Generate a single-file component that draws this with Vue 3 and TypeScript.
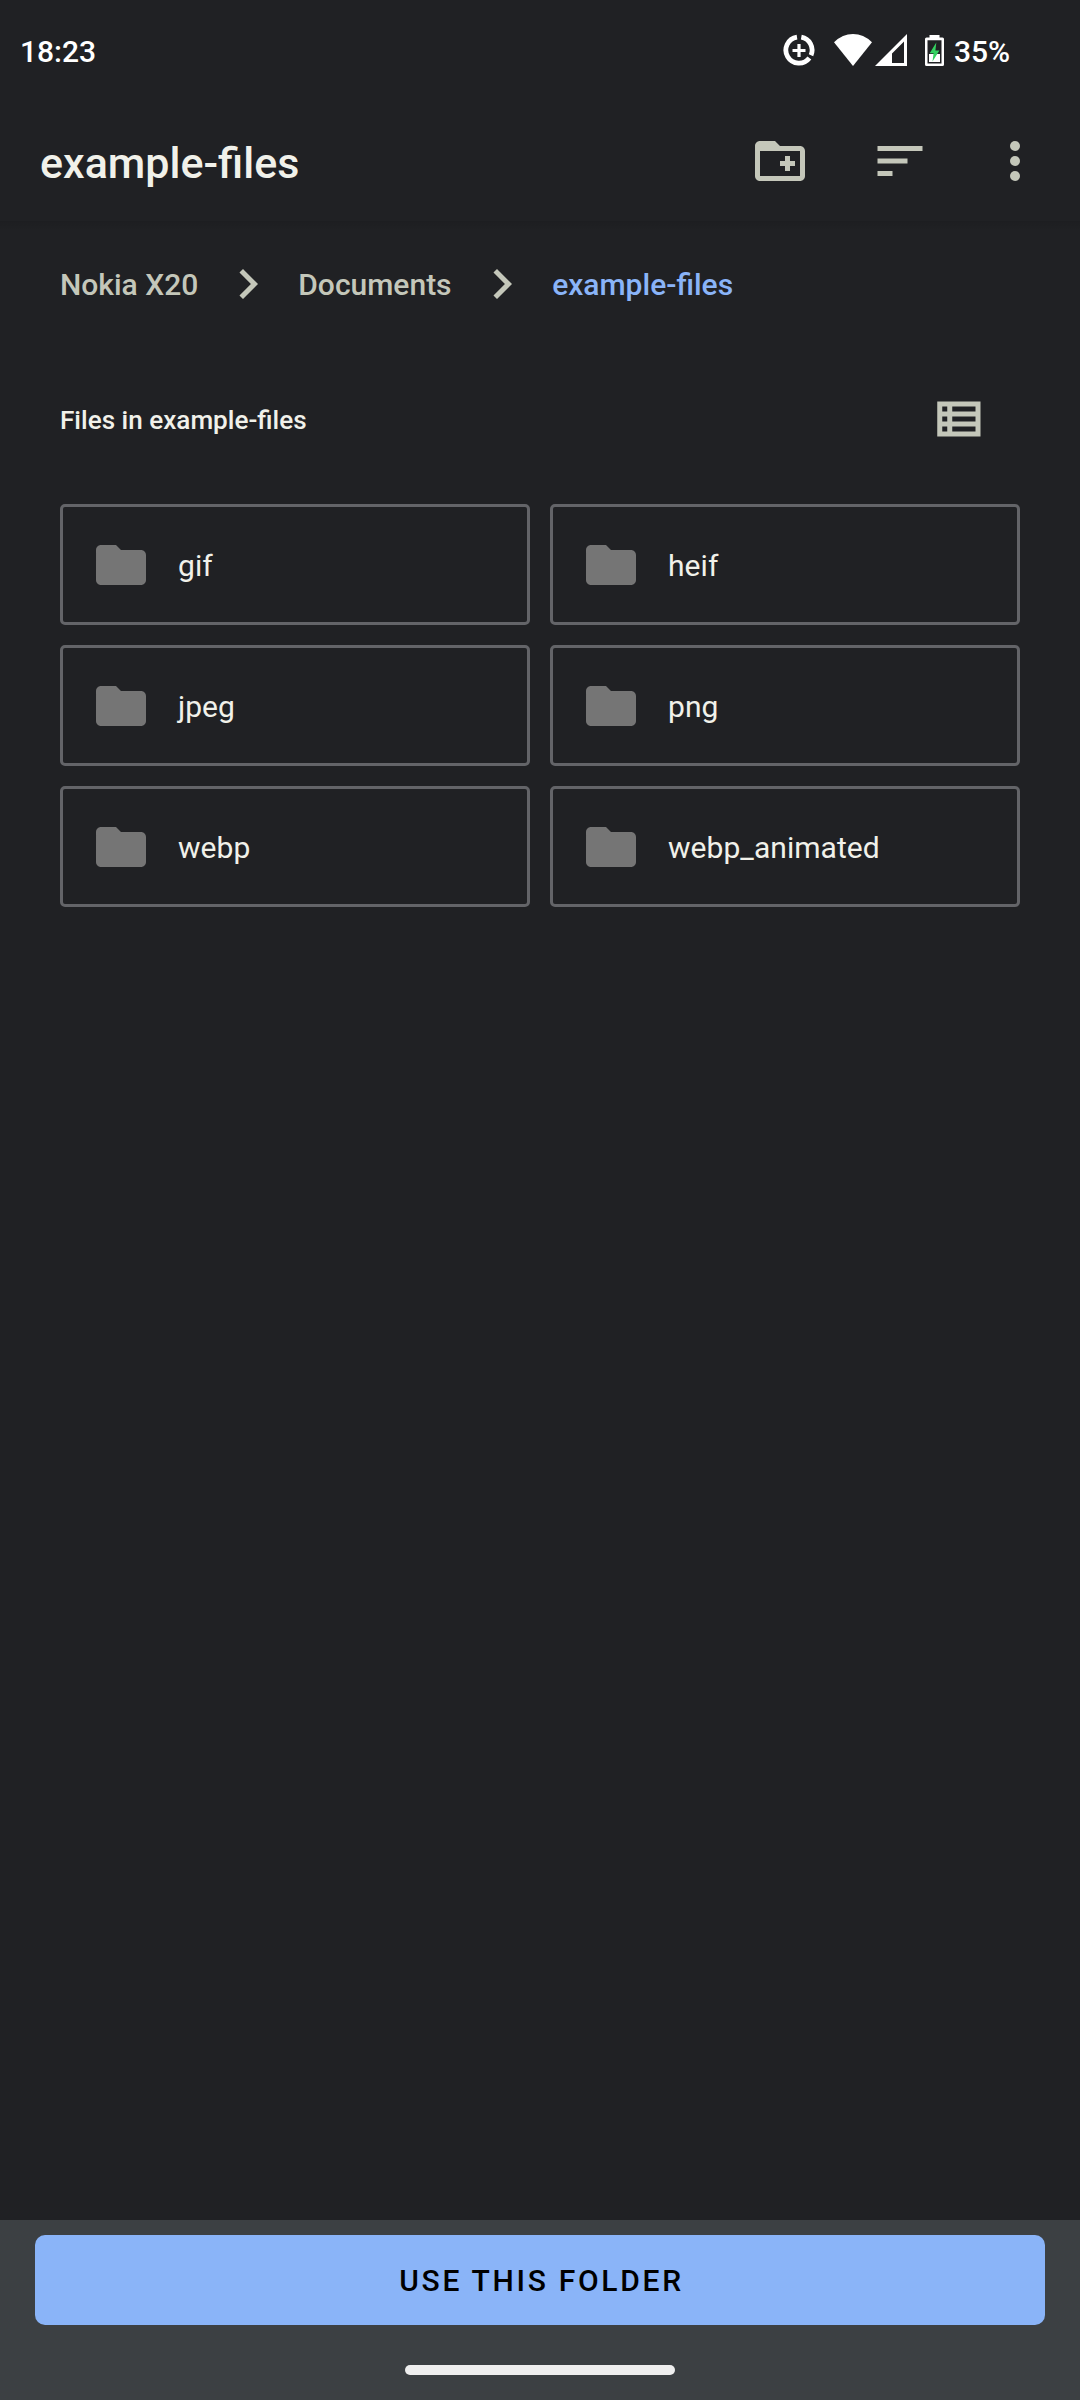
<script setup lang="ts">
interface Crumb {
  label: string
  current?: boolean
}

const crumbs: Crumb[] = [
  { label: 'Nokia X20' },
  { label: 'Documents' },
  { label: 'example-files', current: true },
]

const folders: string[] = ['gif', 'heif', 'jpeg', 'png', 'webp', 'webp_animated']
</script>

<template>
  <div class="screen">
    <div class="status-bar">
      <span class="clock">18:23</span>
      <div class="indicators">
        <svg class="saver" viewBox="0 0 32 32">
          <path d="M18.3 3.1A13.1 13.1 0 0 1 28 21.2M26.4 24A13.1 13.1 0 1 1 14 3.1" fill="none" stroke="#fff" stroke-width="4.8" />
          <path d="M16 10v13M9.500 16.500h13" stroke="#fff" stroke-width="3.200" />
        </svg>
        <svg class="wifi" viewBox="0 0 38 32">
          <path d="M0 8.200Q8.500 0 19 0T38 8.200L19 32Z" fill="#fff" />
        </svg>
        <svg class="signal" viewBox="0 0 32 32">
          <path d="M32 0V32H0ZM29 7.500L17 19.500V29H29Z" fill="#fff" fill-rule="evenodd" />
        </svg>
        <svg class="battery" viewBox="0 0 19 31">
          <path d="M4.500 0H14.500V2.500H17.500Q19 2.500 19 4V29.500Q19 31 17.500 31H1.500Q0 31 0 29.500V4Q0 2.500 1.500 2.500H4.500ZM2.500 5.300V28.500H16.500V5.300Z" fill="#fff" fill-rule="evenodd" />
          <path d="M4 19H15V27H4Z" fill="#fff" />
          <path d="M11.300 7.500L4.700 18.200H8.600L7.500 26.500L14.400 15.500H10.400Z" fill="#34d160" />
        </svg>
        <span class="percent">35%</span>
      </div>
    </div>

    <header class="toolbar">
      <h1 class="title">example-files</h1>
      <div class="actions">
        <svg class="icon" viewBox="0 0 24 24">
          <path d="M20 6h-8l-2-2H4c-1.110 0-1.990.89-1.990 2L2 18c0 1.110.89 2 2 2h16c1.110 0 2-.89 2-2V8c0-1.110-.89-2-2-2zm0 12H4V8h16v10zM14 14h-2v-2h2v-2h2v2h2v2h-2v2h-2z" />
        </svg>
        <svg class="icon" viewBox="0 0 24 24">
          <path d="M3 18h6v-2H3v2zM3 6v2h18V6H3zm0 7h12v-2H3v2z" />
        </svg>
        <svg class="icon" viewBox="0 0 24 24">
          <circle cx="12" cy="6" r="2" />
          <circle cx="12" cy="12" r="2" />
          <circle cx="12" cy="18" r="2" />
        </svg>
      </div>
    </header>

    <main class="content">
      <nav class="crumbs">
        <template v-for="(crumb, index) in crumbs" :key="crumb.label">
          <svg v-if="index > 0" class="icon chevron" viewBox="0 0 24 24">
            <path d="M10 6L8.590 7.410 13.170 12l-4.580 4.590L10 18l6-6z" />
          </svg>
          <span class="crumb" :class="{ current: crumb.current }">{{ crumb.label }}</span>
        </template>
      </nav>

      <div class="section-head">
        <h2 class="section-title">Files in example-files</h2>
        <svg class="icon" viewBox="0 0 24 24">
          <path fill-rule="evenodd" d="M2.900 5H20.200V19H2.900ZM4.900 7V9H6.900V7ZM8.900 7V9H18.200V7ZM4.900 11V13H6.900V11ZM8.900 11V13H18.200V11ZM4.900 15V17H6.900V15ZM8.900 15V17H18.200V15Z" />
        </svg>
      </div>

      <div class="grid">
        <div v-for="name in folders" :key="name" class="card">
          <svg class="folder" viewBox="0 0 24 24">
            <path d="M10 4H4c-1.100 0-1.990.9-1.990 2L2 18c0 1.100.9 2 2 2h16c1.100 0 2-.9 2-2V8c0-1.100-.9-2-2-2h-8l-2-2z" />
          </svg>
          <span class="name">{{ name }}</span>
        </div>
      </div>
    </main>

    <footer class="bottom">
      <button class="use" type="button">USE THIS FOLDER</button>
      <div class="pill"></div>
    </footer>
  </div>
</template>

<style>
body {
  margin: 0;
  background: #202124;
}
</style>

<style scoped>
.screen {
  display: flex;
  flex-direction: column;
  width: 1080px;
  height: 2400px;
  overflow: hidden;
  background: #202124;
  color: #f1f1ea;
  font-family: Roboto, sans-serif;
}

svg {
  display: block;
  flex: none;
}

.status-bar {
  display: flex;
  justify-content: space-between;
  height: 101px;
  box-sizing: border-box;
  padding: 34px 70px 0 20px;
  color: #fff;
}

.clock {
  font-size: 30px;
  font-weight: 500;
  line-height: 35px;
}

.indicators {
  display: flex;
}

.saver {
  width: 32px;
  height: 32px;
  margin-right: 19px;
}

.wifi {
  width: 38px;
  height: 32px;
  margin-right: 3px;
}

.signal {
  width: 32px;
  height: 32px;
  margin-right: 18px;
}

.battery {
  width: 19px;
  height: 31px;
  margin: 1px 10px 0 0;
}

.percent {
  width: 56px;
  font-size: 30px;
  font-weight: 500;
  line-height: 35px;
  white-space: nowrap;
}

.toolbar {
  display: flex;
  align-items: center;
  justify-content: space-between;
  height: 120px;
  box-sizing: border-box;
  padding: 0 35px 0 40px;
}

.title {
  margin: 3px 0 0;
  font-size: 43px;
  font-weight: 500;
  line-height: 52px;
}

.actions {
  display: flex;
  gap: 60px;
}

.actions .icon:last-child {
  margin-left: -5px;
}

.icon {
  width: 60px;
  height: 60px;
  fill: #c4c7ba;
}

.content {
  flex: 1;
  padding: 0 60px;
  background: linear-gradient(rgba(0, 0, 0, 0.09), transparent 10px);
}

.crumbs {
  display: flex;
  align-items: center;
  gap: 20px;
  height: 126px;
}

.crumb {
  padding-top: 2px;
  color: #c4c7ba;
  font-size: 30px;
  font-weight: 500;
  line-height: 36px;
}

.crumb.current {
  margin-left: 0.6px;
  color: #8ab4f8;
}

.section-head {
  display: flex;
  align-items: center;
  justify-content: space-between;
  height: 144px;
  padding-right: 30px;
}

.section-title {
  margin: 0;
  padding-top: 2px;
  font-size: 26.1px;
  font-weight: 500;
  line-height: 32px;
}

.grid {
  display: grid;
  grid-template-columns: 1fr 1fr;
  gap: 20px;
  margin-top: 13px;
}

.card {
  display: flex;
  align-items: center;
  height: 121px;
  box-sizing: border-box;
  padding-left: 28px;
  border: 3px solid #636468;
  border-radius: 5px;
}

.folder {
  width: 60px;
  height: 60px;
  fill: #757575;
}

.name {
  margin-left: 27px;
  padding-top: 2px;
  font-size: 30px;
  line-height: 36px;
  letter-spacing: 0.05px;
}

.bottom {
  display: flex;
  flex-direction: column;
  align-items: center;
  height: 180px;
  box-sizing: border-box;
  padding: 15px 35px 0;
  background: #3c4043;
}

.use {
  width: 100%;
  height: 90px;
  padding: 0 0 0 3px;
  border: 0;
  border-radius: 10px;
  background: #8ab4f8;
  color: #000;
  font-family: inherit;
  font-size: 30px;
  font-weight: 500;
  letter-spacing: 2.7px;
}

.pill {
  width: 270px;
  height: 10px;
  margin-top: 40px;
  border-radius: 5px;
  background: #efefef;
}
</style>
